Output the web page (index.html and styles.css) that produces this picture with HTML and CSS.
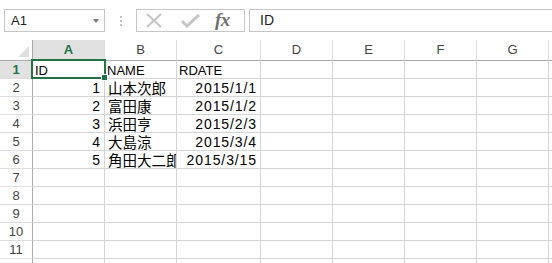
FILE: index.html
```html
<!DOCTYPE html>
<html>
<head>
<meta charset="utf-8">
<link rel="stylesheet" href="styles.css">
</head>
<body>
<div class="bar">
  <div class="namebox"><span class="nb-text">A1</span><span class="nb-arrow"></span></div>
  <div class="dots"><i></i><i></i><i></i></div>
  <div class="fxbox">
    <svg class="ic-x" width="18" height="15" viewBox="0 0 18 15"><path d="M2 1 L16 14 M16 1 L2 14" stroke="#c4c4c4" stroke-width="2" fill="none"/></svg>
    <svg class="ic-ok" width="19" height="14" viewBox="0 0 19 14"><path d="M1 7 L6 12 L18 1" stroke="#c4c4c4" stroke-width="3" fill="none"/></svg>
    <span class="fx">fx</span>
  </div>
  <div class="formula">ID</div>
</div>
<div class="sheet">
  <div class="grid">
    <div class="corner"><span class="tri"></span></div>
    <div class="ch sel">A</div><div class="ch">B</div><div class="ch">C</div><div class="ch">D</div><div class="ch">E</div><div class="ch">F</div><div class="ch">G</div><div class="ch"></div>

    <div class="rh sel">1</div><div class="c">ID</div><div class="c">NAME</div><div class="c">RDATE</div><div class="c"></div><div class="c"></div><div class="c"></div><div class="c"></div><div class="c"></div>
    <div class="rh">2</div><div class="c n">1</div><div class="c j">山本次郎</div><div class="c n">2015/1/1</div><div class="c"></div><div class="c"></div><div class="c"></div><div class="c"></div><div class="c"></div>
    <div class="rh">3</div><div class="c n">2</div><div class="c j">富田康</div><div class="c n">2015/1/2</div><div class="c"></div><div class="c"></div><div class="c"></div><div class="c"></div><div class="c"></div>
    <div class="rh">4</div><div class="c n">3</div><div class="c j">浜田亨</div><div class="c n">2015/2/3</div><div class="c"></div><div class="c"></div><div class="c"></div><div class="c"></div><div class="c"></div>
    <div class="rh">5</div><div class="c n">4</div><div class="c j">大島涼</div><div class="c n">2015/3/4</div><div class="c"></div><div class="c"></div><div class="c"></div><div class="c"></div><div class="c"></div>
    <div class="rh">6</div><div class="c n">5</div><div class="c j">角田大二郎</div><div class="c n">2015/3/15</div><div class="c"></div><div class="c"></div><div class="c"></div><div class="c"></div><div class="c"></div>
    <div class="rh">7</div><div class="c"></div><div class="c"></div><div class="c"></div><div class="c"></div><div class="c"></div><div class="c"></div><div class="c"></div><div class="c"></div>
    <div class="rh">8</div><div class="c"></div><div class="c"></div><div class="c"></div><div class="c"></div><div class="c"></div><div class="c"></div><div class="c"></div><div class="c"></div>
    <div class="rh">9</div><div class="c"></div><div class="c"></div><div class="c"></div><div class="c"></div><div class="c"></div><div class="c"></div><div class="c"></div><div class="c"></div>
    <div class="rh">10</div><div class="c"></div><div class="c"></div><div class="c"></div><div class="c"></div><div class="c"></div><div class="c"></div><div class="c"></div><div class="c"></div>
    <div class="rh">11</div><div class="c"></div><div class="c"></div><div class="c"></div><div class="c"></div><div class="c"></div><div class="c"></div><div class="c"></div><div class="c"></div>
    <div class="rh"></div><div class="c"></div><div class="c"></div><div class="c"></div><div class="c"></div><div class="c"></div><div class="c"></div><div class="c"></div><div class="c"></div>
  </div>
  <div class="selection"><span class="handle"></span></div>
</div>
</body>
</html>
```

FILE: styles.css
```css
html, body {
  margin: 0;
  padding: 0;
  background: #fff;
  overflow: hidden;
}
body {
  width: 552px;
  height: 263px;
  font-family: "Liberation Sans", Arial, sans-serif;
  color: #000;
}
.bar {
  height: 40px;
  box-sizing: border-box;
  padding-top: 9px;
  display: flex;
  align-items: flex-start;
}
.namebox {
  margin-left: 4px;
  width: 101px;
  height: 23px;
  box-sizing: border-box;
  border: 1px solid #c6c6c6;
  display: flex;
  align-items: center;
  justify-content: space-between;
  padding: 0 5px 0 6px;
  font-size: 13px;
  color: #222;
}
.nb-arrow {
  width: 0;
  height: 0;
  border-left: 3.5px solid transparent;
  border-right: 3.5px solid transparent;
  border-top: 4px solid #777;
}
.dots {
  width: 31px;
  height: 23px;
  display: flex;
  flex-direction: column;
  align-items: center;
  justify-content: center;
  gap: 2px;
}
.dots i {
  display: block;
  width: 2px;
  height: 2px;
  background: #c0c0c0;
}
.fxbox {
  width: 109px;
  height: 23px;
  box-sizing: border-box;
  border: 1px solid #c6c6c6;
  display: flex;
  align-items: center;
  padding-left: 8px;
}
.ic-x { margin-right: 18px; }
.ic-ok { margin-right: 15px; }
.fx {
  font-family: "Liberation Serif", "Times New Roman", serif;
  font-style: italic;
  font-weight: bold;
  font-size: 19px;
  color: #707070;
  letter-spacing: -0.5px;
  margin-top: -1px;
}
.formula {
  margin-left: 4px;
  flex: 1;
  height: 23px;
  box-sizing: border-box;
  border: 1px solid #c6c6c6;
  border-right: none;
  padding-left: 10px;
  font-size: 14px;
  line-height: 21px;
  color: #222;
}
.sheet {
  position: relative;
  height: 223px;
  overflow: hidden;
}
.grid {
  display: grid;
  grid-template-columns: 33px 72px 72px 84px 72px 72px 72px 72px 72px;
  grid-template-rows: 21px repeat(12, 18px);
}
.corner {
  position: relative;
  box-sizing: border-box;
  border-right: 1px solid #ababab;
  border-bottom: 1px solid #ababab;
}
.tri {
  position: absolute;
  right: 3px;
  bottom: 3px;
  width: 0;
  height: 0;
  border-left: 11px solid transparent;
  border-bottom: 11px solid #dfdfdf;
}
.ch {
  box-sizing: border-box;
  border-right: 1px solid #dedede;
  border-bottom: 1px solid #ababab;
  font-size: 13px;
  color: #444;
  text-align: center;
  line-height: 20px;
}
.ch.sel {
  background: #e1e1e1;
  color: #217346;
  font-weight: bold;
  border-bottom: 2px solid #217346;
  line-height: 19px;
}
.rh {
  box-sizing: border-box;
  border-right: 1px solid #ababab;
  border-bottom: 1px solid #dedede;
  font-size: 13px;
  color: #444;
  text-align: center;
  line-height: 18px;
}
.rh.sel {
  background: #e1e1e1;
  color: #217346;
  font-weight: bold;
}
.c {
  box-sizing: border-box;
  border-right: 1px solid #d4d4d4;
  border-bottom: 1px solid #d4d4d4;
  font-size: 13px;
  line-height: 19px;
  padding: 0 2px;
  white-space: nowrap;
  overflow: hidden;
}
.c.n {
  text-align: right;
  padding-right: 3px;
  font-size: 14px;
  letter-spacing: 0.9px;
  line-height: 18px;
}
.c.j {
  font-family: "Noto Sans CJK JP", sans-serif;
  font-size: 14.5px;
  line-height: 18px;
  padding-left: 3px;
}
.selection {
  position: absolute;
  left: 31px;
  top: 19px;
  width: 75px;
  height: 20px;
  box-sizing: border-box;
  border: 2px solid #217346;
}
.handle {
  position: absolute;
  right: -4px;
  bottom: -4px;
  width: 5px;
  height: 5px;
  background: #217346;
  border: 1px solid #fff;
}
```
